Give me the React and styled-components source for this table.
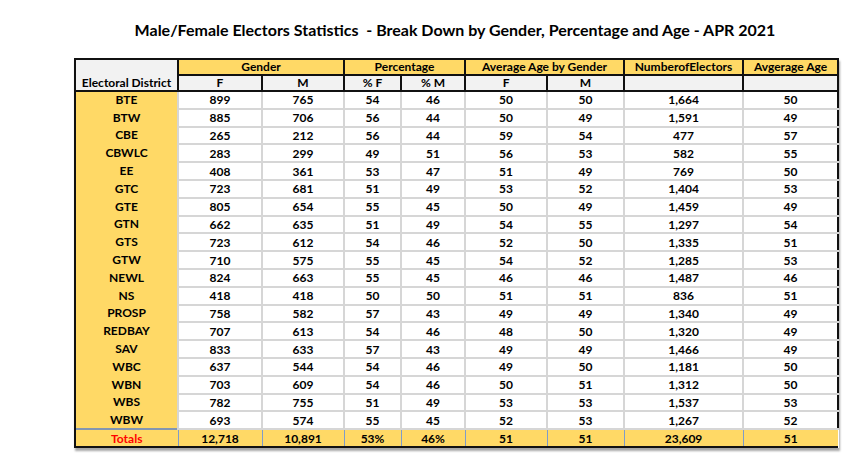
import React from 'react'
import styled, { createGlobalStyle } from 'styled-components'

const GlobalStyle = createGlobalStyle`
  html, body {
    margin: 0;
    padding: 0;
    background: #ffffff;
  }
  body {
    font-family: Lato, "Open Sans", sans-serif;
    color: #000;
  }
`

const rows = [
  ['BTE', '899', '765', '54', '46', '50', '50', '1,664', '50'],
  ['BTW', '885', '706', '56', '44', '50', '49', '1,591', '49'],
  ['CBE', '265', '212', '56', '44', '59', '54', '477', '57'],
  ['CBWLC', '283', '299', '49', '51', '56', '53', '582', '55'],
  ['EE', '408', '361', '53', '47', '51', '49', '769', '50'],
  ['GTC', '723', '681', '51', '49', '53', '52', '1,404', '53'],
  ['GTE', '805', '654', '55', '45', '50', '49', '1,459', '49'],
  ['GTN', '662', '635', '51', '49', '54', '55', '1,297', '54'],
  ['GTS', '723', '612', '54', '46', '52', '50', '1,335', '51'],
  ['GTW', '710', '575', '55', '45', '54', '52', '1,285', '53'],
  ['NEWL', '824', '663', '55', '45', '46', '46', '1,487', '46'],
  ['NS', '418', '418', '50', '50', '51', '51', '836', '51'],
  ['PROSP', '758', '582', '57', '43', '49', '49', '1,340', '49'],
  ['REDBAY', '707', '613', '54', '46', '48', '50', '1,320', '49'],
  ['SAV', '833', '633', '57', '43', '49', '49', '1,466', '49'],
  ['WBC', '637', '544', '54', '46', '49', '50', '1,181', '50'],
  ['WBN', '703', '609', '54', '46', '50', '51', '1,312', '50'],
  ['WBS', '782', '755', '51', '49', '53', '53', '1,537', '53'],
  ['WBW', '693', '574', '55', '45', '52', '53', '1,267', '52'],
]

const totals = ['12,718', '10,891', '53%', '46%', '51', '51', '23,609', '51']

const widths = [103, 84, 82, 57, 64, 82, 77, 119, 95]

const Page = styled.div`
  width: 864px;
  height: 476px;
  padding-top: 19px;
  box-sizing: border-box;
  overflow: hidden;
`

const Title = styled.h1`
  margin: 0 0 18px 0;
  padding-left: 46px;
  text-align: center;
  font-size: 16px;
  line-height: 21px;
  font-weight: 700;
  white-space: pre;
`

const Table = styled.table`
  margin-left: 74px;
  border-collapse: collapse;
  table-layout: fixed;
  width: 763px;
  font-size: 12px;
  font-weight: 700;
  box-shadow: 1px 3px 2px rgba(0, 0, 0, 0.35);
`

const HeadCell = styled.th`
  background: ${({ $gray }) => ($gray ? '#f2f2f2' : '#ffd966')};
  border: 2px solid #111;
  height: ${({ $tall }) => ($tall ? '30px' : '13px')};
  padding: 0;
  font-weight: 700;
  text-align: center;
  vertical-align: ${({ $bottom }) => ($bottom ? 'bottom' : 'middle')};
  line-height: 14px;
  white-space: nowrap;
`

const Row = styled.tr`
  height: 17.8px;
`

const District = styled.td`
  background: #ffd966;
  border-left: 2px solid #111;
  border-right: 1px solid #f0d78a;
  padding: 0;
  text-align: center;
  line-height: 14px;
`

const Cell = styled.td`
  background: #ffffff;
  border: 2px solid #d6d6d6;
  border-right: ${({ $last }) => ($last ? '2px solid #111' : '2px solid #d6d6d6')};
  padding: 0;
  text-align: center;
  line-height: 13px;
`

const TotalRow = styled.tr`
  height: 18px;
`

const TotalLabel = styled.td`
  background: #ffd966;
  color: #ff0000;
  border-top: 2px solid #8496b0;
  border-left: 2px solid #111;
  border-bottom: 2px solid #111;
  border-right: 1px solid #7f9cc9;
  padding: 0;
  text-align: center;
`

const TotalCell = styled.td`
  background: #ffd966;
  border-top: 2px solid #1c2538;
  border-bottom: 2px solid #111;
  border-right: ${({ $last }) => ($last ? 'none' : '1px solid #7f9cc9')};
  padding: 0;
  text-align: center;
`

export default function App() {
  return (
    <Page>
      <GlobalStyle />
      <Title>{'Male/Female Electors Statistics  - Break Down by Gender, Percentage and Age - APR 2021'}</Title>
      <Table>
        <colgroup>
          {widths.map((w, i) => (
            <col key={i} style={{ width: w }} />
          ))}
        </colgroup>
        <thead>
          <tr>
            <HeadCell $gray $bottom rowSpan={2}>Electoral District</HeadCell>
            <HeadCell colSpan={2}>Gender</HeadCell>
            <HeadCell colSpan={2}>Percentage</HeadCell>
            <HeadCell colSpan={2}>Average Age by Gender</HeadCell>
            <HeadCell>NumberofElectors</HeadCell>
            <HeadCell>Avgerage Age</HeadCell>
          </tr>
          <tr>
            {['F', 'M', '% F', '% M', 'F', 'M', '', ''].map((t, i) => (
              <HeadCell key={i} $gray>{t}</HeadCell>
            ))}
          </tr>
        </thead>
        <tbody>
          {rows.map((r) => (
            <Row key={r[0]}>
              <District>{r[0]}</District>
              {r.slice(1).map((v, i) => (
                <Cell key={i} $last={i === 7}>{v}</Cell>
              ))}
            </Row>
          ))}
          <TotalRow>
            <TotalLabel>Totals</TotalLabel>
            {totals.map((v, i) => (
              <TotalCell key={i} $last={i === 7}>{v}</TotalCell>
            ))}
          </TotalRow>
        </tbody>
      </Table>
    </Page>
  )
}
